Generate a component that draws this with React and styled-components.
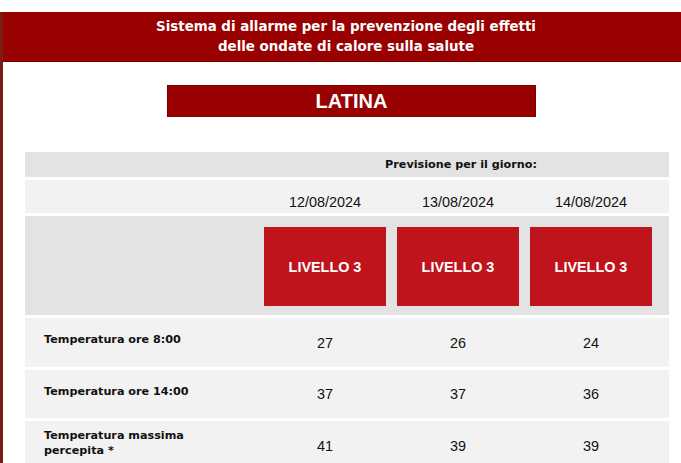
import React from "react";
import styled, { createGlobalStyle } from "styled-components";

const GlobalStyle = createGlobalStyle`
  body {
    margin: 0;
    background: #ffffff;
    overflow: hidden;
  }
`;

const Page = styled.div`
  width: 686px;
  margin-top: 12px;
  border-left: 3px solid #7d1a12;
  min-height: 460px;
  background: #ffffff;
`;

const Banner = styled.div`
  background: #990000;
  border-bottom: 1px solid #7a0000;
  padding: 5px 0 4px;
  text-align: center;
  color: #ffffff;
  font-family: "DejaVu Sans", Verdana, sans-serif;
  font-weight: bold;
  font-size: 13.4px;
  line-height: 20px;
`;

const City = styled.div`
  width: 367px;
  height: 30px;
  margin: 23px 0 0 164px;
  background: #990000;
  border: 1px solid #7a0000;
  color: #ffffff;
  font-family: "Liberation Sans", Arial, sans-serif;
  font-weight: bold;
  font-size: 20px;
  display: flex;
  align-items: center;
  justify-content: center;
`;

const Table = styled.div`
  width: 644px;
  margin: 35px 0 0 22px;
  display: flex;
  flex-direction: column;
  gap: 3px;
`;

const Row = styled.div`
  display: grid;
  grid-template-columns: 233.5px repeat(3, 133px) 1fr;
  height: ${(p) => p.$h}px;
  background: ${(p) => (p.$dark ? "#e3e3e3" : "#f2f2f2")};
`;

const Caption = styled.div`
  grid-column: 2 / 5;
  display: flex;
  align-items: center;
  justify-content: center;
  padding-left: 6px;
  font-family: "DejaVu Sans", Verdana, sans-serif;
  font-weight: bold;
  font-size: 11.2px;
  color: #111111;
`;

const Cell = styled.div`
  display: flex;
  align-items: ${(p) => p.$align || "center"};
  justify-content: center;
  padding-bottom: ${(p) => p.$pb || 0}px;
  font-family: "Liberation Sans", Arial, sans-serif;
  font-size: 14.4px;
  color: #111111;
`;

const LevelCell = styled.div`
  display: flex;
  justify-content: center;
  padding-top: 11px;
`;

const Level = styled.div`
  width: 122px;
  height: 79px;
  background: #c0141c;
  color: #ffffff;
  font-family: "Liberation Sans", Arial, sans-serif;
  font-weight: bold;
  font-size: 14.4px;
  display: flex;
  align-items: center;
  justify-content: center;
`;

const Label = styled.div`
  display: flex;
  align-items: center;
  padding: 0 0 6px 19px;
  font-family: "DejaVu Sans", Verdana, sans-serif;
  font-weight: bold;
  font-size: 11.2px;
  line-height: 15px;
  color: #111111;
`;

const days = ["12/08/2024", "13/08/2024", "14/08/2024"];

const rows = [
  { label: "Temperatura ore 8:00", values: [27, 26, 24], h: 49 },
  { label: "Temperatura ore 14:00", values: [37, 37, 36], h: 48 },
  { label: "Temperatura massima\npercepita *", values: [41, 39, 39], h: 50 },
];

export default function App() {
  return (
    <>
      <GlobalStyle />
      <Page>
        <Banner>
          Sistema di allarme per la prevenzione degli effetti
          <br />
          delle ondate di calore sulla salute
        </Banner>
        <City>LATINA</City>
        <Table>
          <Row $h={25} $dark>
            <div />
            <Caption>Previsione per il giorno:</Caption>
          </Row>
          <Row $h={33}>
            <div />
            {days.map((d) => (
              <Cell key={d} $align="flex-end" $pb={3}>
                {d}
              </Cell>
            ))}
          </Row>
          <Row $h={99} $dark>
            <div />
            {days.map((d) => (
              <LevelCell key={d}>
                <Level>LIVELLO 3</Level>
              </LevelCell>
            ))}
          </Row>
          {rows.map((r) => (
            <Row key={r.label} $h={r.h}>
              <Label>
                <span style={{ whiteSpace: "pre-line" }}>{r.label}</span>
              </Label>
              {r.values.map((v, i) => (
                <Cell key={i}>{v}</Cell>
              ))}
            </Row>
          ))}
        </Table>
      </Page>
    </>
  );
}
